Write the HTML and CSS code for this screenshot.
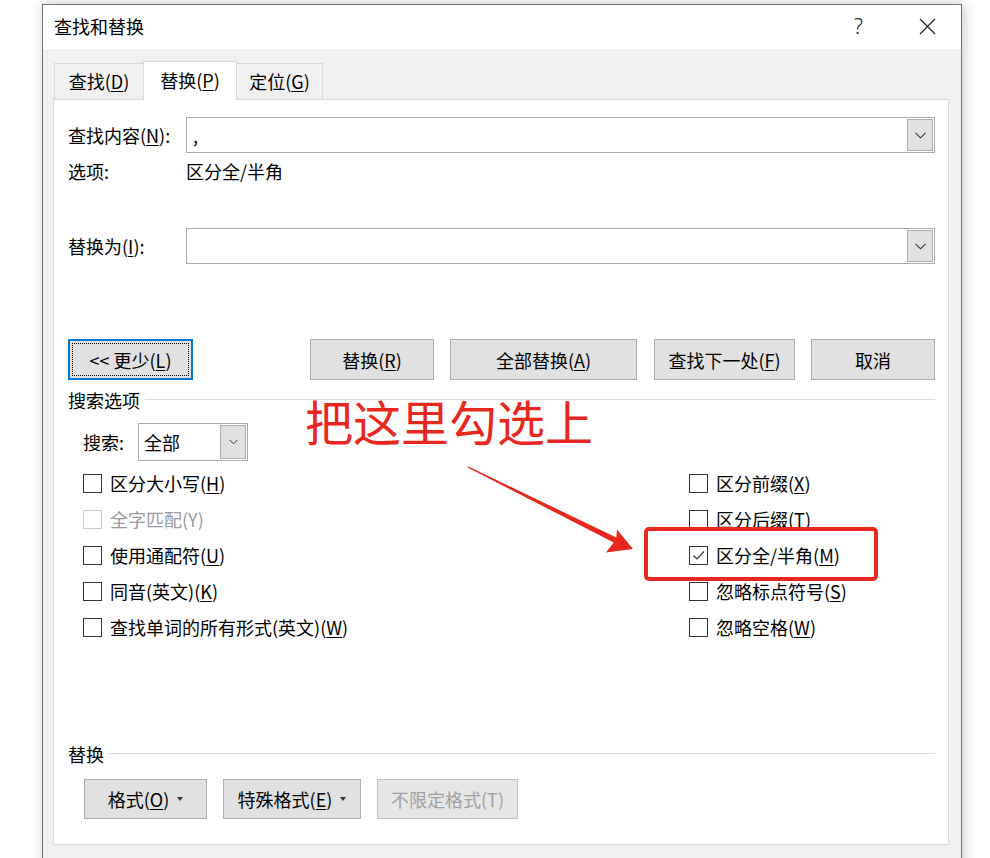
FILE: index.html
```html
<!DOCTYPE html>
<html lang="zh">
<head>
    <meta charset="UTF-8">
    <title>查找和替换</title>
    <link rel="stylesheet" href="styles.css">
</head>
<body>
    <!-- 对话框 -->
    <div class="dialog">
        <div class="titlebar">
            <span class="title">查找和替换</span>
            <span class="help">?</span>
            <svg class="close" width="17" height="17" viewBox="0 0 17 17">
                <path d="M1 1 L16 16 M16 1 L1 16" stroke="#222" stroke-width="1.2" fill="none"/>
            </svg>
        </div>
        <div class="dialog-body">
            <div class="tabs">
                <div class="tab tab-find">查找(<u>D</u>)</div>
                <div class="tab tab-replace active">替换(<u>P</u>)</div>
                <div class="tab tab-goto">定位(<u>G</u>)</div>
            </div>
            <div class="panel">
                <div class="field-row">
                    <label class="field-label">查找内容(<u>N</u>):</label>
                    <div class="combo">
                        <span class="combo-value">,</span>
                        <span class="drop-btn"><svg width="11" height="7" viewBox="0 0 11 7"><path d="M0.5 0.8 L5.5 5.8 L10.5 0.8" stroke="#333" stroke-width="1.1" fill="none"/></svg></span>
                    </div>
                </div>
                <div class="options-row">
                    <span class="field-label">选项:</span>
                    <span>区分全/半角</span>
                </div>
                <div class="field-row replace-row">
                    <label class="field-label">替换为(<u>I</u>):</label>
                    <div class="combo">
                        <span class="combo-value"></span>
                        <span class="drop-btn"><svg width="11" height="7" viewBox="0 0 11 7"><path d="M0.5 0.8 L5.5 5.8 L10.5 0.8" stroke="#333" stroke-width="1.1" fill="none"/></svg></span>
                    </div>
                </div>

                <div class="action-row">
                    <button class="btn btn-less"><span class="focus-ring">&lt;&lt; 更少(<u>L</u>)</span></button>
                    <div class="action-group">
                        <button class="btn w124">替换(<u>R</u>)</button>
                        <button class="btn w187">全部替换(<u>A</u>)</button>
                        <button class="btn w141">查找下一处(<u>F</u>)</button>
                        <button class="btn w124">取消</button>
                    </div>
                </div>

                <!-- 搜索选项 -->
                <div class="group-head"><span>搜索选项</span><i class="rule"></i></div>
                <div class="search-row">
                    <span class="search-label">搜索:</span>
                    <div class="select">
                        <span class="select-value">全部</span>
                        <span class="drop-btn"><svg width="9" height="6" viewBox="0 0 9 6"><path d="M0.5 0.8 L4.5 4.8 L8.5 0.8" stroke="#333" stroke-width="1" fill="none"/></svg></span>
                    </div>
                </div>
                <div class="checks">
                    <div class="check"><span class="box"></span><span>区分大小写(<u>H</u>)</span></div>
                    <div class="check"><span class="box"></span><span>区分前缀(<u>X</u>)</span></div>
                    <div class="check disabled"><span class="box"></span><span>全字匹配(Y)</span></div>
                    <div class="check"><span class="box"></span><span>区分后缀(<u>T</u>)</span></div>
                    <div class="check"><span class="box"></span><span>使用通配符(<u>U</u>)</span></div>
                    <div class="check"><span class="box"><svg width="17" height="17" viewBox="0 0 17 17"><path d="M3.5 8.5 L7 12 L14 4.5" stroke="#333" stroke-width="1.2" fill="none"/></svg></span><span>区分全/半角(<u>M</u>)</span></div>
                    <div class="check"><span class="box"></span><span>同音(英文)(<u>K</u>)</span></div>
                    <div class="check"><span class="box"></span><span>忽略标点符号(<u>S</u>)</span></div>
                    <div class="check"><span class="box"></span><span>查找单词的所有形式(英文)(<u>W</u>)</span></div>
                    <div class="check"><span class="box"></span><span>忽略空格(<u>W</u>)</span></div>
                </div>

                <!-- 替换 -->
                <div class="group-head replace-head"><span>替换</span><i class="rule"></i></div>
                <div class="format-row">
                    <button class="btn w123">格式(<u>O</u>)<i class="caret"></i></button>
                    <button class="btn w138">特殊格式(<u>E</u>)<i class="caret"></i></button>
                    <button class="btn w141" disabled>不限定格式(T)</button>
                </div>
            </div>
        </div>
    </div>

    <!-- 标注 -->
    <div class="callout-text">把这里勾选上</div>
    <div class="callout-box"></div>
    <svg class="callout-arrow" width="990" height="858" viewBox="0 0 990 858">
        <polygon fill="#e8281e" points="468.4,466.4 616.3,537.6 617,529.5 633,549 606,552.5 613.7,542.4 467.6,467.6"/>
    </svg>
</body>
</html>
```

FILE: styles.css
```css
/* 基础样式 */
* {
    margin: 0;
    padding: 0;
    box-sizing: border-box;
}

body {
    position: relative;
    width: 990px;
    height: 858px;
    overflow: hidden;
    background: #fff;
    font-family: "Noto Sans CJK SC", "Microsoft YaHei", sans-serif;
    font-size: 18px;
    color: #000;
}

u {
    text-underline-offset: 2px;
    text-decoration-thickness: 1px;
}

/* 对话框 */
.dialog {
    margin: 4px 0 0 42px;
    width: 920px;
    height: 900px;
    border: 1px solid #707070;
    background: #f0f0f0;
    box-shadow: 2px 0 14px rgba(0, 0, 0, 0.22);
}

.titlebar {
    height: 44px;
    background: #fff;
    display: flex;
    align-items: center;
    padding-left: 11px;
    padding-bottom: 2px;
}

.help {
    margin-left: auto;
    font-family: "Noto Sans", sans-serif;
    font-weight: 300;
    font-size: 21px;
    color: #222;
}

.close {
    margin-left: 56px;
    margin-right: 25px;
}

.dialog-body {
    padding-top: 12px;
}

/* 选项卡 */
.tabs {
    display: flex;
    align-items: flex-end;
    margin-left: 11px;
    height: 38px;
    position: relative;
    z-index: 1;
}

.tab {
    height: 36px;
    line-height: 34px;
    text-align: center;
    border: 1px solid #d9d9d9;
    border-bottom: none;
    background: #f0f0f0;
}

.tab-find { width: 89px; border-right: none; }
.tab-replace { width: 94px; }
.tab-goto { width: 86px; border-left: none; }

.tab.active {
    height: 39px;
    line-height: 36px;
    margin-bottom: -1px;
    background: #fff;
}

.panel {
    margin-left: 10px;
    width: 896px;
    border: 1px solid #d9d9d9;
    background: #fff;
    padding: 0 13px 25px 14px;
}

/* 输入行 */
.field-row {
    display: flex;
    align-items: center;
    height: 36px;
    margin-top: 17px;
}

.field-row.replace-row {
    margin-top: 39px;
}

.field-label {
    width: 118px;
    flex: none;
}

.options-row {
    height: 36px;
    display: flex;
    align-items: center;
}

.combo {
    flex: 1;
    height: 36px;
    border: 1px solid #ababab;
    display: flex;
    align-items: center;
    padding-left: 6px;
}

.combo-value {
    flex: 1;
}

.drop-btn {
    width: 26px;
    height: 32px;
    margin-right: 1px;
    background: #e1e1e1;
    border: 1px solid #adadad;
    display: flex;
    align-items: center;
    justify-content: center;
}

/* 按钮 */
.btn {
    height: 41px;
    font: inherit;
    color: #000;
    background: #e1e1e1;
    border: 1px solid #adadad;
    display: inline-flex;
    align-items: center;
    justify-content: center;
}

.btn:disabled {
    color: #a0a0a0;
    background: #e6e6e6;
    border-color: #c2c2c2;
}

.w123 { width: 123px; }
.w124 { width: 124px; }
.w138 { width: 138px; }
.w141 { width: 141px; }
.w187 { width: 187px; }

.action-row {
    margin-top: 75px;
    display: flex;
}

.action-group {
    margin-left: auto;
    display: flex;
    gap: 16px;
}

.action-group .w187 {
    margin-right: 1px;
}

.btn-less {
    width: 125px;
    border: 2px solid #0078d7;
    padding: 2px;
}

.focus-ring {
    width: 100%;
    height: 100%;
    border: 1px dotted #000;
    display: flex;
    align-items: center;
    justify-content: center;
}

/* 分组标题 */
.group-head {
    margin-top: 10px;
    height: 20px;
    display: flex;
    align-items: center;
    gap: 5px;
    line-height: 20px;
}

.rule {
    flex: 1;
    height: 1px;
    background: #dcdcdc;
    margin-top: -2px;
}

.group-head.replace-head {
    margin-top: 99px;
}

.search-row {
    margin-top: 13px;
    height: 38px;
    padding-left: 15px;
    display: flex;
    align-items: center;
}

.search-label {
    width: 55px;
}

.select {
    width: 110px;
    height: 38px;
    border: 1px solid #ababab;
    display: flex;
    align-items: center;
    padding-left: 5px;
}

.select-value {
    flex: 1;
}

.select .drop-btn {
    height: 34px;
}

/* 复选框 */
.checks {
    margin-top: 4px;
    padding-left: 15px;
    display: grid;
    grid-template-columns: 606px 1fr;
    grid-auto-rows: 36px;
}

.check {
    display: flex;
    align-items: center;
    gap: 8px;
}

.box {
    width: 19px;
    height: 19px;
    border: 1px solid #333;
    display: flex;
    align-items: center;
    justify-content: center;
}

.check.disabled {
    color: #9a9a9a;
}

.check.disabled .box {
    border-color: #cccccc;
}

.format-row {
    margin-top: 15px;
    padding-left: 16px;
    display: flex;
    gap: 16px;
}

.format-row .btn {
    height: 40px;
}

.caret {
    margin-left: 8px;
    border-left: 3.5px solid transparent;
    border-right: 3.5px solid transparent;
    border-top: 4px solid #333;
}

/* 标注 */
.callout-text {
    position: absolute;
    left: 305px;
    top: 396px;
    font-size: 48px;
    line-height: 48px;
    color: #e8281e;
}

.callout-box {
    position: absolute;
    left: 644px;
    top: 527px;
    width: 234px;
    height: 54px;
    border: 4px solid #e8281e;
    border-radius: 5px;
}

.callout-arrow {
    position: absolute;
    left: 0;
    top: 0;
}
```
